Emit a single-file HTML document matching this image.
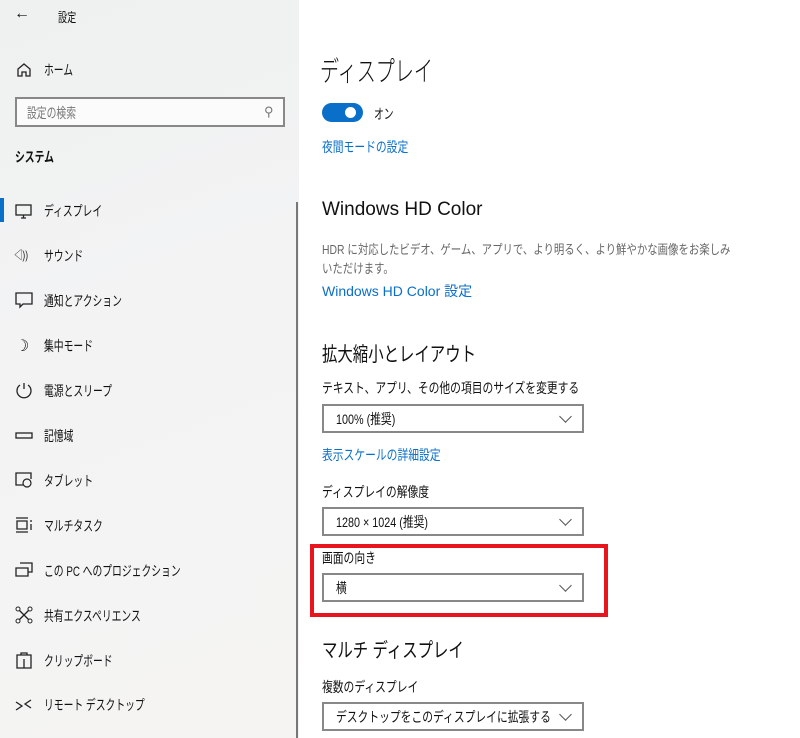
<!DOCTYPE html>
<html><head><meta charset="utf-8"><style>
*{margin:0;padding:0;box-sizing:border-box}
body{width:800px;height:738px;overflow:hidden;position:relative;background:#fff;font-family:"Liberation Sans","Noto Sans CJK JP",sans-serif;color:#111}
#side{position:absolute;left:0;top:0;width:299px;height:738px;background:linear-gradient(160deg,#eef1f0 0%,#f3f3f4 40%,#f5f4f3 100%)}
.a{position:absolute;white-space:nowrap;transform-origin:0 0}
.s{transform:scaleX(0.7)}
.r{transform:scaleX(0.77)}
.nav{font-size:14px;color:#111}
.ic{position:absolute;left:14px;width:20px;height:20px}
.blue{color:#0a6fc9}
.dd{position:absolute;left:322px;width:262px;height:29px;border:2px solid #888;background:#fff;font-size:14px;padding:3px 0 0 12px;white-space:nowrap}
.dd span{display:inline-block;transform:scaleX(0.77);transform-origin:0 0}
.dd:after{content:"";position:absolute;right:12px;top:6px;width:8px;height:8px;border-right:1px solid #555;border-bottom:1px solid #555;transform:rotate(45deg)}
.lbl{font-size:14px}
.h2{font-size:20px}
</style></head><body>
<div id="side"></div>
<div style="position:absolute;left:296px;top:202px;width:2px;height:536px;background:#777"></div>
<div class="a" style="left:14px;top:5px;font-size:16px">←</div>
<div class="a s" style="left:58px;top:7px;font-size:13px">設定</div>
<svg class="ic" style="top:60px" viewBox="0 0 20 20"><path d="M4 9L10 4L16 9V16H12V12H8V16H4Z" fill="none" stroke="#222" stroke-width="1.3"/></svg>
<div class="a nav s" style="left:44px;top:60px">ホーム</div>
<div style="position:absolute;left:15px;top:97px;width:270px;height:30px;border:2px solid #888;background:#fbfbfb"></div>
<div class="a s" style="left:27px;top:103px;font-size:14px;color:#777">設定の検索</div>
<div class="a" style="left:264px;top:104px;font-size:13px;color:#777">⚲</div>
<div class="a s" style="left:15px;top:147px;font-size:14px;font-weight:bold">システム</div>
<div style="position:absolute;left:0;top:198px;width:4px;height:24px;background:#0a6fc9"></div>
<svg class="ic" style="top:201px" viewBox="0 0 20 20"><rect x="2" y="4" width="15" height="10" fill="none" stroke="#222" stroke-width="1.3"/><path d="M7 17H12M9.5 14V17" stroke="#222" stroke-width="1.3"/></svg>
<div class="a nav s" style="left:44px;top:201px">ディスプレイ</div>
<div class="a nav s" style="left:14px;top:246px;font-size:12px">◁))</div>
<div class="a nav s" style="left:44px;top:246px">サウンド</div>
<svg class="ic" style="top:290px" viewBox="0 0 20 20"><path d="M2 3H18V14H9L6 17V14H2Z" fill="none" stroke="#222" stroke-width="1.3"/></svg>
<div class="a nav s" style="left:44px;top:291px">通知とアクション</div>
<div class="a nav" style="left:15px;top:336px;font-size:16px">☽</div>
<div class="a nav s" style="left:44px;top:336px">集中モード</div>
<svg class="ic" style="top:380px" viewBox="0 0 20 20"><path d="M6 5A7 7 0 1 0 14 5M10 3V9" fill="none" stroke="#222" stroke-width="1.3"/></svg>
<div class="a nav s" style="left:44px;top:381px">電源とスリープ</div>
<svg class="ic" style="top:425px" viewBox="0 0 20 20"><rect x="2" y="8" width="16" height="5" fill="none" stroke="#222" stroke-width="1.3"/></svg>
<div class="a nav s" style="left:44px;top:426px">記憶域</div>
<svg class="ic" style="top:470px" viewBox="0 0 20 20"><path d="M9 15H2V3H17V9" fill="none" stroke="#222" stroke-width="1.3"/><circle cx="13" cy="13" r="4" fill="none" stroke="#222" stroke-width="1.2"/></svg>
<div class="a nav s" style="left:44px;top:471px">タブレット</div>
<svg class="ic" style="top:515px" viewBox="0 0 20 20"><path d="M2 3H14M2 17H14M3 6V14H13V6Z M17 5V7M17 9V15" fill="none" stroke="#222" stroke-width="1.3"/></svg>
<div class="a nav s" style="left:44px;top:516px">マルチタスク</div>
<svg class="ic" style="top:560px" viewBox="0 0 20 20"><path d="M6 3H18V12H14M2 8H14V16H2Z" fill="none" stroke="#222" stroke-width="1.3"/></svg>
<div class="a nav s" style="left:44px;top:561px">この PC へのプロジェクション</div>
<svg class="ic" style="top:605px" viewBox="0 0 20 20"><path d="M5 5L15 15M15 5L5 15" stroke="#222" stroke-width="1.3"/><circle cx="4" cy="4" r="2" fill="#fff" stroke="#222"/><circle cx="16" cy="4" r="2" fill="#fff" stroke="#222"/><circle cx="4" cy="16" r="2" fill="#fff" stroke="#222"/><circle cx="16" cy="16" r="2" fill="#fff" stroke="#222"/></svg>
<div class="a nav s" style="left:44px;top:606px">共有エクスペリエンス</div>
<svg class="ic" style="top:650px" viewBox="0 0 20 20"><path d="M3 5H17V18H3Z M7 5V3H13V5 M10 9V18" fill="none" stroke="#222" stroke-width="1.3"/></svg>
<div class="a nav s" style="left:44px;top:651px">クリップボード</div>
<svg class="ic" style="top:695px" viewBox="0 0 20 20"><path d="M2 7L8 11L2 15M17 5L11 9L17 13" fill="none" stroke="#222" stroke-width="1.3"/></svg>
<div class="a nav s" style="left:44px;top:695px">リモート デスクトップ</div>

<div class="a" style="left:320px;top:50px;font-size:28px;font-weight:300;transform:scaleX(0.68)">ディスプレイ</div>
<div style="position:absolute;left:322px;top:103px;width:41px;height:19px;border-radius:10px;background:#0a6fc9"></div>
<div style="position:absolute;left:345px;top:107px;width:11px;height:11px;border-radius:50%;background:#fff"></div>
<div class="a s" style="left:374px;top:104px;font-size:14px">オン</div>
<div class="a blue r" style="left:322px;top:137px;font-size:14px">夜間モードの設定</div>
<div class="a h2" style="left:322px;top:199px;font-size:19px">Windows HD Color</div>
<div class="a" style="left:322px;top:240px;font-size:13px;color:#666;line-height:19px;transform:scaleX(0.8)">HDR に対応したビデオ、ゲーム、アプリで、より明るく、より鮮やかな画像をお楽しみ<br>いただけます。</div>
<div class="a blue" style="left:322px;top:281px;font-size:14px">Windows HD Color 設定</div>
<div class="a h2 r" style="left:322px;top:338px">拡大縮小とレイアウト</div>
<div class="a lbl r" style="left:322px;top:378px">テキスト、アプリ、その他の項目のサイズを変更する</div>
<div class="dd" style="top:404px"><span>100% (推奨)</span></div>
<div class="a blue r" style="left:322px;top:445px;font-size:14px">表示スケールの詳細設定</div>
<div class="a lbl r" style="left:322px;top:482px">ディスプレイの解像度</div>
<div class="dd" style="top:507px"><span>1280 × 1024 (推奨)</span></div>
<div class="a lbl r" style="left:322px;top:548px">画面の向き</div>
<div class="dd" style="top:573px"><span>横</span></div>
<div style="position:absolute;left:310px;top:544px;width:298px;height:73px;border:4px solid #e8141e"></div>
<div class="a h2 r" style="left:322px;top:634px">マルチ ディスプレイ</div>
<div class="a lbl r" style="left:322px;top:677px">複数のディスプレイ</div>
<div class="dd" style="top:702px"><span>デスクトップをこのディスプレイに拡張する</span></div>
</body></html>
